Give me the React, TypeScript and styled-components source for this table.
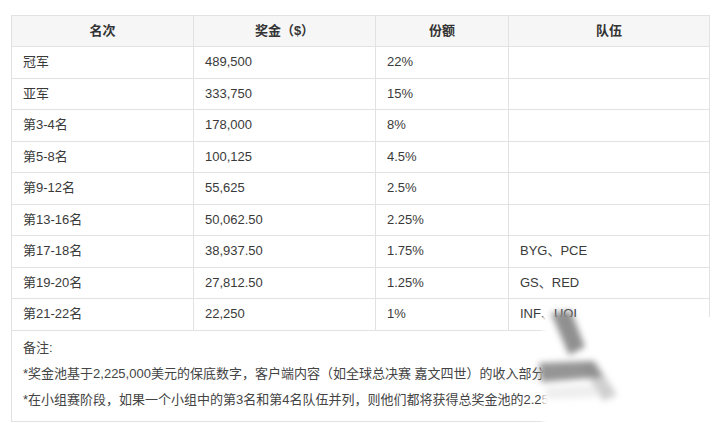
import React from "react";
import styled, { createGlobalStyle } from "styled-components";

const GlobalStyle = createGlobalStyle`
  html, body {
    margin: 0;
    padding: 0;
    background: #fff;
  }
  body {
    font-family: "Liberation Sans", "Noto Sans CJK SC", Arial, sans-serif;
    color: #333;
  }
`;

const Page = styled.div`
  position: relative;
  width: 724px;
  height: 423px;
  overflow: hidden;
  padding: 15px 0 0 11px;
  box-sizing: border-box;
`;

const Table = styled.table`
  border-collapse: collapse;
  table-layout: fixed;
  width: 698px;
  font-size: 13px;
  color: #3a3a3a;

  td,
  th {
    border: 1px solid #e3e1e4;
    padding: 0 11px;
    text-align: left;
    font-weight: 400;
    line-height: 18px;
  }
`;

const HeadRow = styled.tr`
  height: 31px;
  background: #f6f6f6;

  th {
    text-align: center;
    font-weight: 700;
    color: #333;
  }
`;

const BodyRow = styled.tr`
  height: 31.5px;
`;

const NoteCell = styled.td`
  && {
    padding: 4px 11px 8px;
    line-height: 26px;
    color: #444;
  }
`;

const NoteLine = styled.div`
  white-space: nowrap;
  overflow: hidden;
`;

const Watermark = styled.div`
  position: absolute;
  left: 541px;
  top: 317px;
  width: 190px;
  height: 120px;
  background: linear-gradient(90deg, rgba(255, 255, 255, 0.5) 0px, #fff 7px);
  pointer-events: none;

  svg {
    position: absolute;
    left: -30px;
    top: -10px;
    filter: blur(3px);
  }
`;

const rows: [string, string, string, string][] = [
  ["冠军", "489,500", "22%", ""],
  ["亚军", "333,750", "15%", ""],
  ["第3-4名", "178,000", "8%", ""],
  ["第5-8名", "100,125", "4.5%", ""],
  ["第9-12名", "55,625", "2.5%", ""],
  ["第13-16名", "50,062.50", "2.25%", ""],
  ["第17-18名", "38,937.50", "1.75%", "BYG、PCE"],
  ["第19-20名", "27,812.50", "1.25%", "GS、RED"],
  ["第21-22名", "22,250", "1%", "INF、UOL"],
];

export default function App() {
  return (
    <>
      <GlobalStyle />
      <Page>
        <Table>
          <colgroup>
            <col style={{ width: 182 }} />
            <col style={{ width: 182 }} />
            <col style={{ width: 133 }} />
            <col style={{ width: 201 }} />
          </colgroup>
          <thead>
            <HeadRow>
              <th>名次</th>
              <th>奖金（$）</th>
              <th>份额</th>
              <th>队伍</th>
            </HeadRow>
          </thead>
          <tbody>
            {rows.map((r) => (
              <BodyRow key={r[0]}>
                <td>{r[0]}</td>
                <td>{r[1]}</td>
                <td>{r[2]}</td>
                <td>{r[3]}</td>
              </BodyRow>
            ))}
            <tr>
              <NoteCell colSpan={4}>
                <NoteLine>备注:</NoteLine>
                <NoteLine>
                  *奖金池基于2,225,000美元的保底数字，客户端内容（如全球总决赛 嘉文四世）的收入部分将计入奖金池。
                </NoteLine>
                <NoteLine>
                  *在小组赛阶段，如果一个小组中的第3名和第4名队伍并列，则他们都将获得总奖金池的2.25%。
                </NoteLine>
              </NoteCell>
            </tr>
          </tbody>
        </Table>
        <Watermark>
          <svg width="140" height="120" viewBox="0 0 140 120">
            <g fill="#8a8a8a">
              <polygon points="40,6 60,4 74,40 58,48" opacity="0.95" />
              <polygon points="28,56 82,54 92,70 30,75" opacity="0.9" />
              <polygon points="70,58 84,54 106,88 92,94" opacity="0.4" />
              <polygon points="34,80 82,78 86,90 36,92" opacity="0.15" />
            </g>
          </svg>
        </Watermark>
      </Page>
    </>
  );
}
